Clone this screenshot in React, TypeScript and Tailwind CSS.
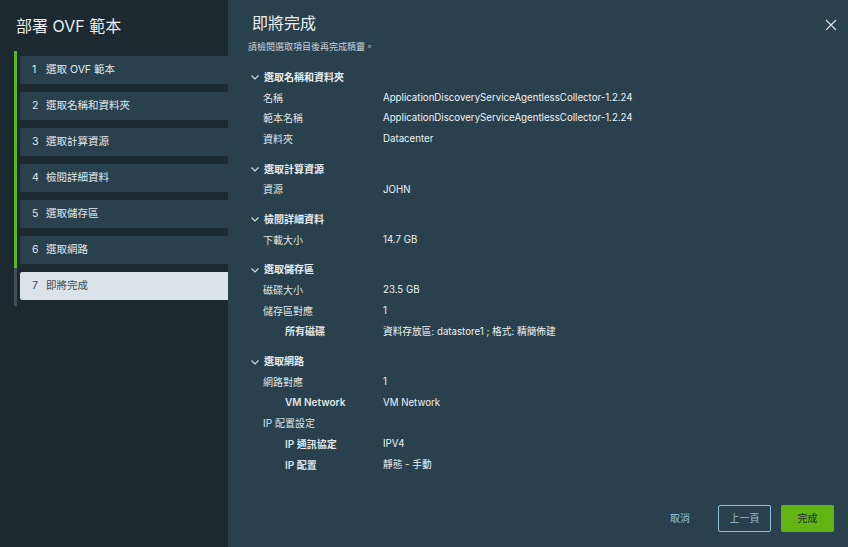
const font = { fontFamily: "Inter, 'Noto Sans CJK TC', sans-serif" };

type Row = { label: string; value?: string; indent?: boolean };
type Section = { title: string; rows: Row[] };

const steps = [
  "選取 OVF 範本",
  "選取名稱和資料夾",
  "選取計算資源",
  "檢閱詳細資料",
  "選取儲存區",
  "選取網路",
  "即將完成",
];

const sections: Section[] = [
  {
    title: "選取名稱和資料夾",
    rows: [
      { label: "名稱", value: "ApplicationDiscoveryServiceAgentlessCollector-1.2.24" },
      { label: "範本名稱", value: "ApplicationDiscoveryServiceAgentlessCollector-1.2.24" },
      { label: "資料夾", value: "Datacenter" },
    ],
  },
  { title: "選取計算資源", rows: [{ label: "資源", value: "JOHN" }] },
  { title: "檢閱詳細資料", rows: [{ label: "下載大小", value: "14.7 GB" }] },
  {
    title: "選取儲存區",
    rows: [
      { label: "磁碟大小", value: "23.5 GB" },
      { label: "儲存區對應", value: "1" },
      { label: "所有磁碟", value: "資料存放區: datastore1 ; 格式: 精簡佈建", indent: true },
    ],
  },
  {
    title: "選取網路",
    rows: [
      { label: "網路對應", value: "1" },
      { label: "VM Network", value: "VM Network", indent: true },
      { label: "IP 配置設定" },
      { label: "IP 通訊協定", value: "IPV4", indent: true },
      { label: "IP 配置", value: "靜態 - 手動", indent: true },
    ],
  },
];

function Chevron() {
  return (
    <svg width="10" height="10" viewBox="0 0 10 10" className="mr-[4px]">
      <path d="M1.5 3.5 L5 7 L8.5 3.5" fill="none" stroke="#d5dee3" strokeWidth="1.1" />
    </svg>
  );
}

export default function App() {
  return (
    <div className="flex h-[547px] w-[848px] overflow-hidden text-[#e6ecef]" style={font}>
      <aside className="flex w-[228px] shrink-0 flex-col bg-[#1c2930]">
        <div className="flex h-[51px] items-center pl-[16px] pt-[1px] text-[16px] text-[#e8edf0]">
          部署 OVF 範本
        </div>
        <div className="relative ml-[14px] flex flex-col gap-[8px] py-[5px] pl-[6px]">
          <div className="absolute left-0 top-0 h-[217px] w-[3px] bg-[#60b515]" />
          <div className="absolute left-0 top-[217px] h-[38px] w-[3px] bg-[#3f4e57]" />
          {steps.map((s, i) => {
            const active = i === steps.length - 1;
            return (
              <div
                key={s}
                className={
                  "flex h-[28px] items-center rounded-l-[2px] pl-[12px] text-[10.5px] " +
                  (active ? "bg-[#dae3e9] text-[#3b4a53]" : "bg-[#29404d] text-[#e3e9ec]")
                }
              >
                <span className="w-[14px]">{i + 1}</span>
                <span>{s}</span>
              </div>
            );
          })}
        </div>
      </aside>
      <main className="relative flex flex-1 flex-col bg-[#29404d] pl-[20px] pr-[14px]">
        <button className="absolute right-[11px] top-[19px] p-0">
          <svg width="12" height="12" viewBox="0 0 12 12">
            <path d="M1 1 L11 11 M11 1 L1 11" stroke="#dbe3e8" strokeWidth="1.2" />
          </svg>
        </button>
        <div className="ml-[4px] mt-[12px] h-[22px] text-[16px] leading-[22px] text-[#e8edf0]">即將完成</div>
        <div className="mt-[7px] text-[9px] leading-[12px] text-[#c9d3d9]">請檢閱選取項目後再完成精靈。</div>
        <div className="mt-[14px] flex flex-col">
          {sections.map((sec, si) => (
            <div key={sec.title} className={si === 0 ? "" : "mt-[9px]"}>
              <div className="flex h-[20.7px] items-center pl-[2px] text-[10px] font-semibold text-[#e8edf0]">
                <Chevron />
                {sec.title}
              </div>
              {sec.rows.map((r) => (
                <div key={r.label + (r.value ?? "")} className="flex h-[20.7px] items-center text-[10px]">
                  <span
                    className={
                      "shrink-0 " +
                      (r.indent ? "w-[135px] pl-[37px] font-semibold text-[#dfe6ea]" : "w-[135px] pl-[15px] text-[#dfe6ea]")
                    }
                  >
                    {r.label}
                  </span>
                  {r.value ? <span className="text-[9.7px] text-[#eef2f4]">{r.value}</span> : null}
                </div>
              ))}
            </div>
          ))}
        </div>
        <div className="mt-auto mb-[15px] flex items-center justify-end gap-[10px]">
          <button className="mr-[18px] text-[10px] text-[#8fc1d6]">取消</button>
          <button className="h-[27px] w-[53px] rounded-[2px] border border-[#8fc1d6] text-[10px] text-[#8fc1d6]">
            上一頁
          </button>
          <button className="h-[27px] w-[53px] rounded-[2px] bg-[#60b515] text-[10px] text-[#1b2a20]">
            完成
          </button>
        </div>
      </main>
    </div>
  );
}
